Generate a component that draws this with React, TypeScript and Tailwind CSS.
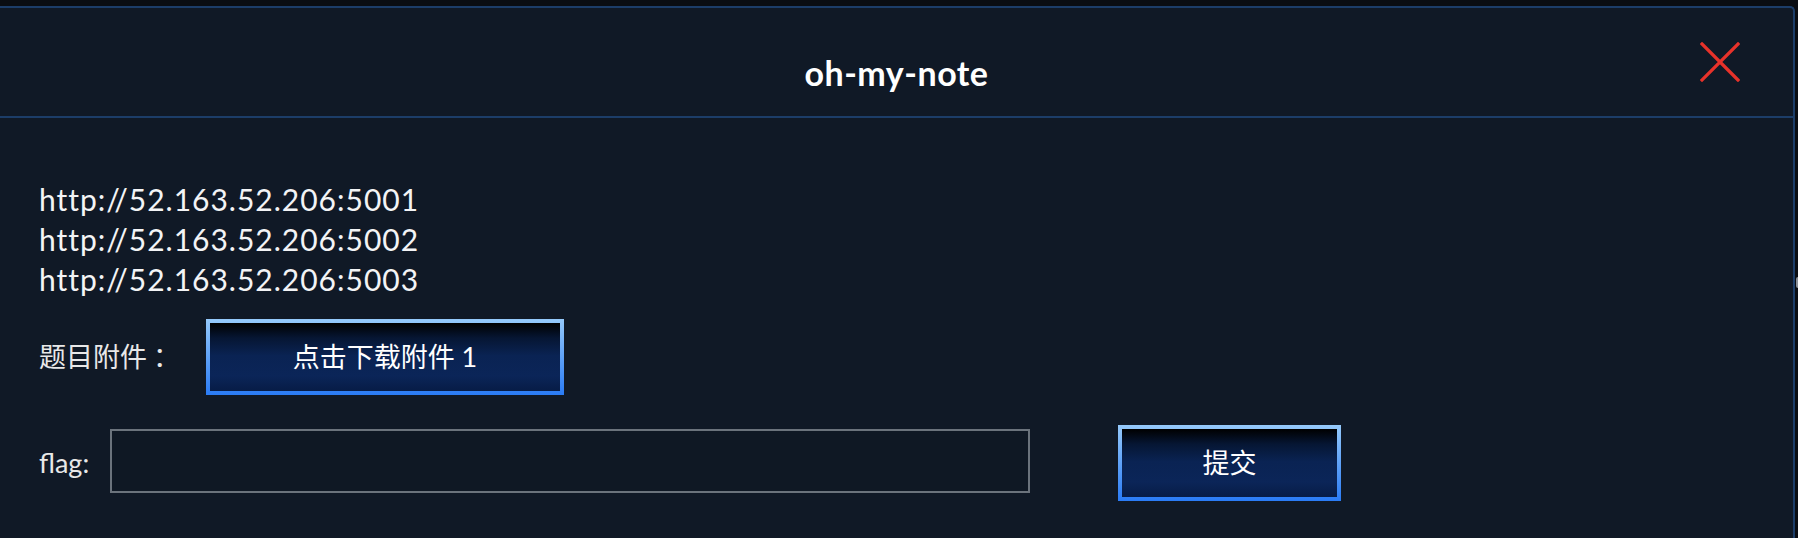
import React from 'react'

const urls = [
  'http://52.163.52.206:5001',
  'http://52.163.52.206:5002',
  'http://52.163.52.206:5003',
]

function GlowButton({ label, className }: { label: string; className: string }) {
  return (
    <button
      className={`p-[4px] bg-[linear-gradient(to_bottom,#95c9fa,#2a7bf5)] ${className}`}
    >
      <span className="flex h-full w-full items-center justify-center bg-[linear-gradient(to_bottom,#000000_0%,#061633_22%,#0a2353_48%,#0b2558_78%,#071c46_100%)] text-[27px] text-white">
        {label}
      </span>
    </button>
  )
}

export default function App() {
  return (
    <div className="flex h-[538px] w-[1798px] overflow-hidden bg-[#0a0d12] pt-[6px] font-['Lato','Noto_Sans_CJK_SC',sans-serif]">
      <div className="flex w-[1796px] flex-col rounded-tr-[5px] border-t-2 border-r-2 border-[#1c3d68] bg-[#101926]">
        {/* header */}
        <div className="grid h-[110px] grid-cols-[1fr_auto_1fr] items-center border-b-2 border-[#1c3d68]">
          <div />
          <h1 className="mt-[20px] text-[34px] font-bold tracking-[0.5px] text-white">oh-my-note</h1>
          <div className="flex justify-end pr-[53px]">
            <svg width="40" height="40" viewBox="0 0 40 40" fill="none">
              <path d="M2 2L38 38M38 2L2 38" stroke="#e8322a" strokeWidth="3.2" strokeLinecap="square" />
            </svg>
          </div>
        </div>

        {/* body */}
        <div className="flex flex-col pl-[39px] pt-[61px]">
          <div className="flex flex-col text-[30px] leading-[40px] tracking-[1px] text-[#f3f4f6]">
            {urls.map((u) => (
              <div key={u}>{u}</div>
            ))}
          </div>

          <div className="mt-[20px] flex items-center">
            <span className="flex w-[167px] text-[27px] text-[#e8e8e8]">
              题目附件<span className="ml-[6px]">：</span>
            </span>
            <GlowButton label="点击下载附件 1" className="h-[76px] w-[358px]" />
          </div>

          <div className="mt-[30px] flex items-center">
            <span className="w-[71px] text-[27px] text-[#e8e8e8]">flag:</span>
            <input className="mb-[4px] h-[64px] w-[920px] border-2 border-[#6b737c] bg-[#0f1824] px-3 text-[24px] text-white outline-none" />
            <GlowButton label="提交" className="ml-[88px] h-[76px] w-[223px]" />
          </div>
        </div>
      </div>
      <div className="pt-[271px] pl-[1px]">
        <div className="h-[11px] w-[2px] rounded-l bg-[#8a8f96]" />
      </div>
    </div>
  )
}
